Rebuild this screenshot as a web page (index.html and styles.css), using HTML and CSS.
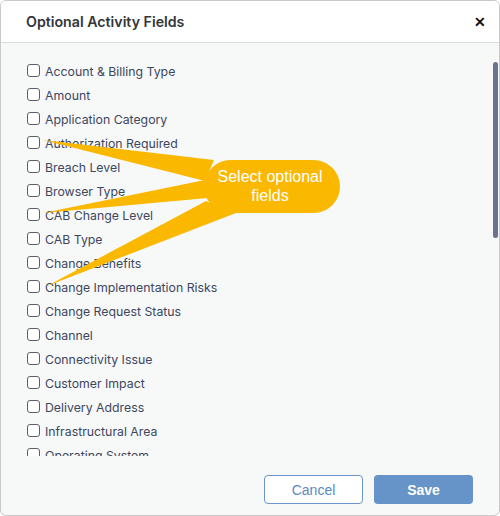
FILE: index.html
```html
<!DOCTYPE html>
<html lang="en">
<head>
    <meta charset="UTF-8">
    <title>Optional Activity Fields</title>
    <link rel="stylesheet" href="styles.css">
</head>
<body>
    <div class="dialog">
        <div class="dialog-header">
            <h2>Optional Activity Fields</h2>
            <span class="close">&#10005;</span>
        </div>

        <div class="dialog-body">
            <ul class="fields">
                <li><label><input type="checkbox"> Account &amp; Billing Type</label></li>
                <li><label><input type="checkbox"> Amount</label></li>
                <li><label><input type="checkbox"> Application Category</label></li>
                <li><label><input type="checkbox"> Authorization Required</label></li>
                <li><label><input type="checkbox"> Breach Level</label></li>
                <li><label><input type="checkbox"> Browser Type</label></li>
                <li><label><input type="checkbox"> CAB Change Level</label></li>
                <li><label><input type="checkbox"> CAB Type</label></li>
                <li><label><input type="checkbox"> Change Benefits</label></li>
                <li><label><input type="checkbox"> Change Implementation Risks</label></li>
                <li><label><input type="checkbox"> Change Request Status</label></li>
                <li><label><input type="checkbox"> Channel</label></li>
                <li><label><input type="checkbox"> Connectivity Issue</label></li>
                <li><label><input type="checkbox"> Customer Impact</label></li>
                <li><label><input type="checkbox"> Delivery Address</label></li>
                <li><label><input type="checkbox"> Infrastructural Area</label></li>
                <li><label><input type="checkbox"> Operating System</label></li>
            </ul>
            <div class="scroll-thumb"></div>
        </div>

        <div class="dialog-footer">
            <button class="btn btn-cancel">Cancel</button>
            <button class="btn btn-save">Save</button>
        </div>

        <svg class="callout" width="500" height="516" viewBox="0 0 500 516">
            <polygon points="43,140 214,160 205,181" />
            <polygon points="43,213 205,180 208,198" />
            <polygon points="47,286 206,201 236,213" />
            <rect x="204" y="160" width="136" height="53" rx="26.5" />
            <text x="270" y="182">Select optional</text>
            <text x="270" y="201">fields</text>
        </svg>
    </div>
</body>
</html>
```

FILE: styles.css
```css
* {
    margin: 0;
    padding: 0;
    box-sizing: border-box;
}

body {
    background-color: #ffffff;
    font-family: Inter, "Noto Sans", sans-serif;
}

.dialog {
    position: relative;
    width: 500px;
    height: 516px;
    border: 1px solid #c9c9c9;
    border-radius: 6px;
    overflow: hidden;
    background-color: #f7f8f8;
    display: flex;
    flex-direction: column;
}

.dialog-header {
    height: 42px;
    flex-shrink: 0;
    background-color: #ffffff;
    border-bottom: 1px solid #dadcde;
    display: flex;
    align-items: center;
    justify-content: space-between;
    padding: 0 13px 0 25px;
}

.dialog-header h2 {
    font-size: 14.2px;
    font-weight: 600;
    color: #333639;
}

.close {
    font-size: 14px;
    font-weight: bold;
    color: #111;
}

.dialog-body {
    position: relative;
    height: 413px;
    flex-shrink: 0;
    overflow: hidden;
}

.fields {
    list-style: none;
    padding: 20px 0 0 26px;
}

.fields li {
    height: 24px;
}

.fields label {
    display: flex;
    align-items: flex-start;
    font-size: 12.3px;
    color: #3d475e;
    line-height: 17px;
}

.fields input {
    appearance: none;
    -webkit-appearance: none;
    width: 13px;
    height: 13px;
    border: 1px solid #5c5f66;
    border-radius: 3px;
    background-color: #fff;
    margin: 1px 5px 0 0;
    flex-shrink: 0;
}

.scroll-thumb {
    position: absolute;
    top: 19px;
    right: 1px;
    width: 5px;
    height: 176px;
    border-radius: 3px;
    background-color: #6b7391;
}

.dialog-footer {
    flex: 1;
    display: flex;
    justify-content: flex-end;
    align-items: flex-start;
    gap: 11px;
    padding: 19px 26px 0 0;
}

.btn {
    width: 99px;
    height: 29px;
    border-radius: 4px;
    font-family: "Liberation Sans", Arial, sans-serif;
    font-size: 14px;
}

.btn-cancel {
    background-color: #fff;
    border: 1px solid #6a95c9;
    color: #5a88c3;
}

.btn-save {
    background-color: #6693c8;
    border: none;
    color: #fff;
    font-weight: bold;
}

.callout {
    position: absolute;
    top: -1px;
    left: -1px;
    pointer-events: none;
}

.callout polygon,
.callout rect {
    fill: #fbb800;
}

.callout text {
    fill: #fff;
    font-family: "Liberation Sans", Arial, sans-serif;
    font-size: 16px;
    text-anchor: middle;
}
```
